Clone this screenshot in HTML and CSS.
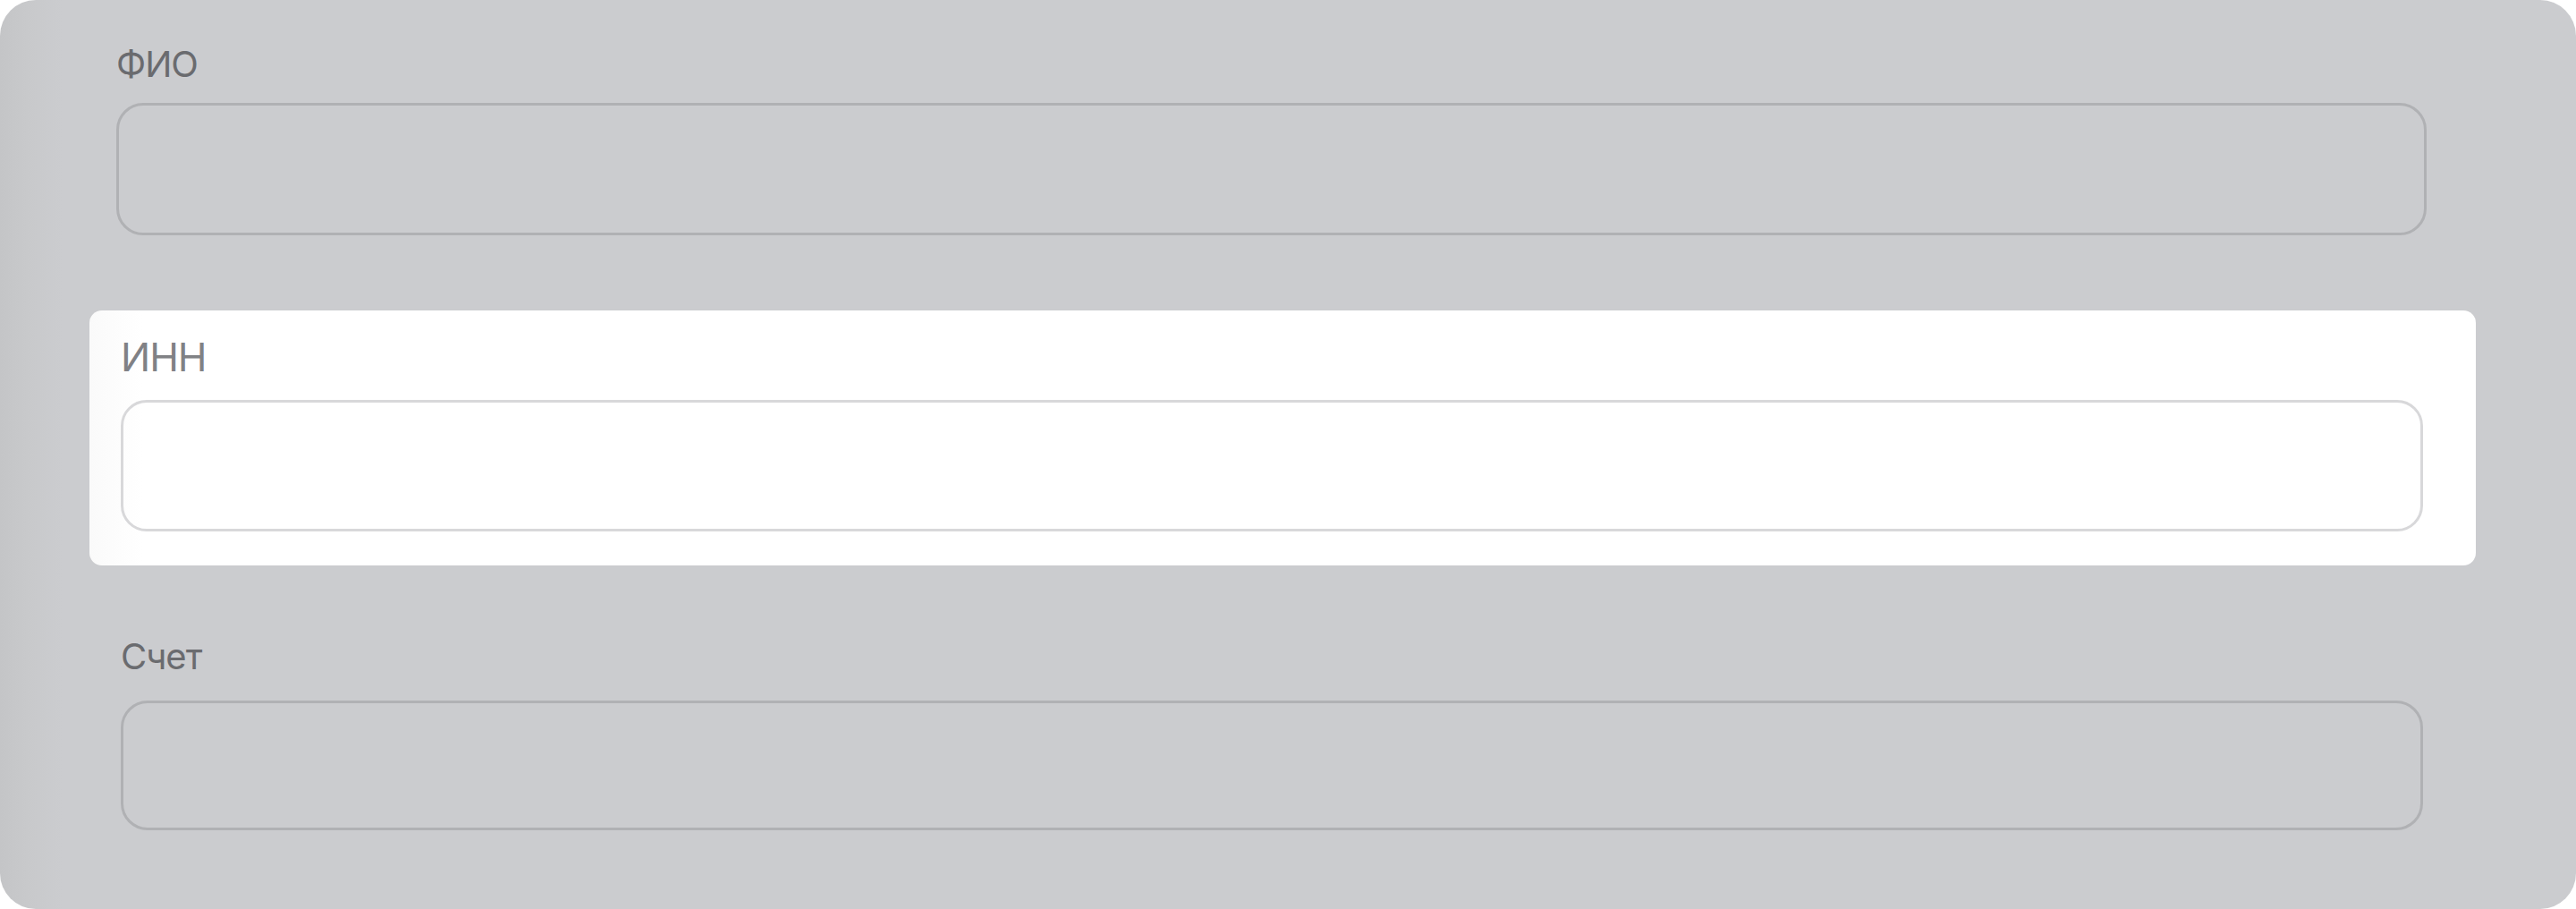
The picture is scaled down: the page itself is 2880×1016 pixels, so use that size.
FILE: index.html
```html
<!DOCTYPE html>
<html lang="ru">
<head>
<meta charset="utf-8">
<title>Форма</title>
<link rel="stylesheet" href="styles.css">
</head>
<body>
<div class="panel">
  <div class="field field-fio">
    <div class="label">ФИО</div>
    <div class="input"></div>
  </div>
  <div class="card">
    <div class="label label-card">ИНН</div>
    <div class="input input-card"></div>
  </div>
  <div class="field field-acc">
    <div class="label">Счет</div>
    <div class="input input-acc"></div>
  </div>
</div>
</body>
</html>
```

FILE: styles.css
```css
html, body {
  margin: 0;
  padding: 0;
  background: #ffffff;
}
body {
  width: 2880px;
  height: 1016px;
  overflow: hidden;
  font-family: Inter, "Noto Sans", sans-serif;
}
.panel {
  box-sizing: border-box;
  width: 2880px;
  height: 1016px;
  border-radius: 40px;
  background: linear-gradient(to right, #c4c5c7 0px, #c8c9cb 30px, #cbcccf 70px, #cbcccf 100%);
  padding-top: 48px;
  display: flex;
  flex-direction: column;
}
.field-fio {
  padding-left: 130px;
  padding-right: 167px;
}
.label {
  font-size: 40px;
  line-height: 48px;
  height: 48px;
  color: #6a6b6f;
  letter-spacing: -1px;
}
.input {
  box-sizing: border-box;
  height: 148px;
  border: 3px solid #b0b1b4;
  border-radius: 30px;
}
.field-fio .label {
  margin-bottom: 19px;
}
.card {
  margin-top: 84px;
  margin-left: 100px;
  width: 2668px;
  box-sizing: border-box;
  background: linear-gradient(to right, #fafafa 0px, #ffffff 60px);
  border-radius: 14px;
  padding: 26px 59px 38px 35px;
}
.label-card {
  font-size: 44px;
  line-height: 52px;
  height: 52px;
  color: #808185;
  margin-bottom: 22px;
}
.input-card {
  height: 147px;
  border-color: #d8d8da;
  border-radius: 29px;
}
.field-acc {
  margin-top: 78px;
  padding-left: 135px;
  padding-right: 171px;
}
.field-acc .label {
  margin-bottom: 25px;
}
.input-acc {
  height: 145px;
}
```
